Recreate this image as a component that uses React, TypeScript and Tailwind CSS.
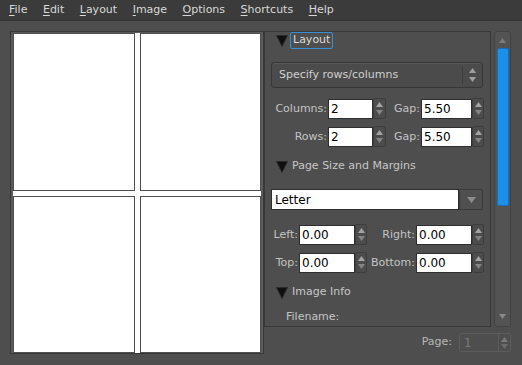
import React from "react";

const Tri = () => (
  <svg width="12" height="12" viewBox="0 0 12 12" className="shrink-0">
    <path d="M0.5 0.5 H11.5 L6 11.5Z" fill="#0f0f0f" stroke="#2b2b2b" strokeWidth="1" />
  </svg>
);

const Up = ({ c = "#a3a3a3" }: { c?: string }) => (
  <svg width="7" height="5" viewBox="0 0 7 5">
    <path d="M3.5 0 L7 5 H0Z" fill={c} />
  </svg>
);
const Down = ({ c = "#848484" }: { c?: string }) => (
  <svg width="7" height="5" viewBox="0 0 7 5">
    <path d="M0 0 H7 L3.5 5Z" fill={c} />
  </svg>
);

const Spin = ({ w }: { w: string }) => (
  <div className={`${w} h-[21px] border border-[#3d3d3d] rounded-[2px] bg-[#4c4c4c] flex flex-col items-center justify-center gap-[3px]`}>
    <Up />
    <Down />
  </div>
);

const Input = ({ w, v }: { w: string; v: string }) => (
  <div className={`${w} h-[20px] bg-white border border-[#2e2e2e] flex items-center pl-[2px] text-[12px] text-black leading-none`}>
    {v}
  </div>
);

const Label = ({ w, t }: { w: string; t: string }) => (
  <div className={`${w} text-right text-[#c4c4c4] text-[11px] leading-none pr-[1px]`}>{t}</div>
);

const Header = ({ t, boxed }: { t: string; boxed?: boolean }) => (
  <div className="flex items-center h-[17px] pl-[11px]">
    <Tri />
    {boxed ? (
      <div className="ml-[2px] h-[17px] border border-[#3a8fd4] rounded-[2px] px-[2px] flex items-center text-[#dcdcdc]">
        {t}
      </div>
    ) : (
      <div className="ml-[4px] text-[#c6c6c6]">{t}</div>
    )}
  </div>
);

const MenuItem = ({ t }: { t: string }) => (
  <span className="px-[7.75px]">
    <span className="underline underline-offset-[2px]">{t[0]}</span>
    {t.slice(1)}
  </span>
);

export default function App() {
  return (
    <div className="w-[522px] h-[365px] bg-[#4e4e4e] overflow-hidden text-[11px]" style={{ fontFamily: "'DejaVu Sans', sans-serif" }}>
      <div className="h-[21px] bg-[#3b3b3b] border-b border-[#333333] flex items-center pl-[1.25px] text-[#d8d8d8]">
        {["File", "Edit", "Layout", "Image", "Options", "Shortcuts", "Help"].map((m) => (
          <MenuItem key={m} t={m} />
        ))}
      </div>
      <div className="flex pt-[10px] pl-[10px]">
        {/* preview */}
        <div className="w-[254px] h-[323px] border border-[#383838] bg-[#5b5b5b] pl-[2px] pr-[2px] pt-[1px]">
          <div className="w-[248px] h-[320px] bg-white grid grid-cols-2 grid-rows-2 gap-[5px]">
            <div className="border border-[#4f4f4f]" />
            <div className="border border-[#4f4f4f]" />
            <div className="border border-[#4f4f4f]" />
            <div className="border border-[#4f4f4f]" />
          </div>
        </div>
        {/* right column */}
        <div className="w-[248px] flex flex-col">
          <div className="flex h-[296px]">
            <div className="w-[227px] h-[296px] border border-[#383838] flex flex-col overflow-hidden">
              <Header t="Layout" boxed />
              <div className="ml-[6px] mt-[13px] w-[212px] h-[26px] border border-[#373737] rounded-[3px] bg-[#4b4b4b] flex items-center shadow-[inset_0_1px_0_#585858]">
                <div className="flex-1 pl-[7px] text-[#d0d0d0]">Specify rows/columns</div>
                <div className="w-[20px] h-[18px] border-l border-[#3c3c3c] flex flex-col items-center justify-center gap-[4px]">
                  <Up c="#a0a0a0" />
                  <Down c="#a0a0a0" />
                </div>
              </div>
              <div className="flex items-center h-[21px] mt-[10px]">
                <Label w="w-[63px]" t="Columns:" />
                <Input w="w-[45px]" v="2" />
                <Spin w="w-[13px]" />
                <Label w="w-[35px]" t="Gap:" />
                <Input w="w-[51px]" v="5.50" />
                <Spin w="w-[12px]" />
              </div>
              <div className="flex items-center h-[21px] mt-[7px]">
                <Label w="w-[63px]" t="Rows:" />
                <Input w="w-[45px]" v="2" />
                <Spin w="w-[13px]" />
                <Label w="w-[35px]" t="Gap:" />
                <Input w="w-[51px]" v="5.50" />
                <Spin w="w-[12px]" />
              </div>
              <div className="mt-[11px]">
                <Header t="Page Size and Margins" />
              </div>
              <div className="ml-[6px] mt-[14px] w-[212px] h-[21px] flex">
                <div className="w-[188px] h-[21px] bg-white border border-[#2e2e2e] flex items-center pl-[3px] text-[12px] text-black">Letter</div>
                <div className="w-[24px] h-[21px] border border-[#3a3a3a] rounded-r-[2px] bg-[#4f4f4f] flex items-center justify-center">
                  <svg width="9" height="6" viewBox="0 0 9 6">
                    <path d="M0 0 H9 L4.5 6Z" fill="#8c8c8c" />
                  </svg>
                </div>
              </div>
              <div className="flex items-center h-[21px] mt-[14px]">
                <Label w="w-[34px]" t="Left:" />
                <Input w="w-[56px]" v="0.00" />
                <Spin w="w-[12px]" />
                <Label w="w-[49px]" t="Right:" />
                <Input w="w-[56px]" v="0.00" />
                <Spin w="w-[12px]" />
              </div>
              <div className="flex items-center h-[21px] mt-[7px]">
                <Label w="w-[34px]" t="Top:" />
                <Input w="w-[56px]" v="0.00" />
                <Spin w="w-[12px]" />
                <Label w="w-[49px]" t="Bottom:" />
                <Input w="w-[56px]" v="0.00" />
                <Spin w="w-[12px]" />
              </div>
              <div className="mt-[11px]">
                <Header t="Image Info" />
              </div>
              <div className="mt-[8px] pl-[21px] text-[#c4c4c4]">Filename:</div>
            </div>
            <div className="ml-[3px] w-[17px] h-[296px] border border-[#424242] rounded-[3px] bg-[#535353] flex flex-col items-center pt-[6px] pb-[7px]">
              <Up c="#7c7c7c" />
              <div className="mt-[5px] w-[12px] h-[158px] bg-[#1c8fe8] border border-[#176fba] rounded-[2px]" />
              <div className="flex-1" />
              <Down c="#8a8a8a" />
            </div>
          </div>
          <div className="flex items-center justify-end mt-[6px] pr-[1px]">
            <span className="text-[#b8b8b8] mr-[7px]">Page:</span>
            <div className="w-[52px] h-[19px] border border-[#5c5c5c] rounded-[2px] flex">
              <div className="w-[39px] border-r border-[#5a5a5a] pl-[4px] flex items-center text-[12px] text-[#7a7a7a]">1</div>
              <div className="flex-1 flex flex-col items-center justify-center gap-[2px]">
                <Up c="#7a7a7a" />
                <Down c="#6c6c6c" />
              </div>
            </div>
          </div>
        </div>
      </div>
    </div>
  );
}
